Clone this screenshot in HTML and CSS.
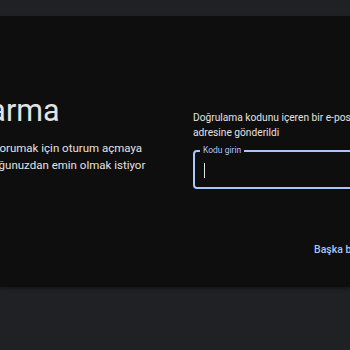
FILE: index.html
```html
<!DOCTYPE html>
<html lang="tr">
<head>
<meta charset="utf-8">
<link rel="stylesheet" href="styles.css">
</head>
<body>
<div class="page">
  <div class="card">
    <div class="left">
      <h1 class="title">Hesap kurtarma</h1>
      <p class="desc">Google, hesabınızı her zaman korumak için oturum açmaya çalışan kişinin sahiden siz olduğunuzdan emin olmak istiyor</p>
    </div>
    <div class="right">
      <p class="info">Doğrulama kodunu içeren bir e-posta adresine gönderildi</p>
      <div class="field">
        <span class="label">Kodu girin</span>
        <span class="caret"></span>
      </div>
      <div class="actions">
        <span class="link">Başka bir yöntem deneyin</span>
      </div>
    </div>
  </div>
</div>
</body>
</html>
```
FILE: styles.css
```css
html, body {
  margin: 0;
  padding: 0;
  background: #202124;
  width: 350px;
  height: 350px;
  overflow: hidden;
}
.page {
  padding-top: 16px;
}
.card {
  height: 271px;
  background: #0e0e0e;
  display: flex;
  overflow: hidden;
  box-shadow: 0 2px 3px rgba(0,0,0,0.35);
}
.left {
  flex: 0 0 325px;
  margin-left: -159px;
  padding-top: 77px;
  color: #e3e3e3;
  font-family: Roboto, "Noto Sans", sans-serif;
}
.title {
  margin: 0;
  font-size: 30.5px;
  font-weight: 400;
  line-height: 36px;
  white-space: nowrap;
}
.desc {
  margin: 11px 0 0;
  font-size: 11.5px;
  line-height: 17px;
}
.right {
  flex: 0 0 auto;
  width: 320px;
  margin-left: 27px;
  padding-top: 94px;
  font-family: Roboto, "Noto Sans", sans-serif;
  color: #e3e3e3;
}
.info {
  margin: 0;
  font-size: 10.2px;
  line-height: 15px;
  width: 180px;
}
.field {
  position: relative;
  margin-top: 10px;
  height: 35px;
  border: 2px solid #a8c7fa;
  border-radius: 4px;
  width: 300px;
}
.label {
  position: absolute;
  left: 5px;
  top: -7px;
  padding: 0 3px;
  background: #0e0e0e;
  color: #a8c7fa;
  font-size: 8.5px;
  line-height: 11px;
}
.caret {
  position: absolute;
  left: 9px;
  top: 11px;
  width: 1px;
  height: 15px;
  background: #e3e3e3;
}
.actions {
  margin-top: 51px;
  padding-left: 121px;
  line-height: 15px;
}
.link {
  color: #a8c7fa;
  font-size: 10.5px;
  font-weight: 500;
  white-space: nowrap;
}
```
